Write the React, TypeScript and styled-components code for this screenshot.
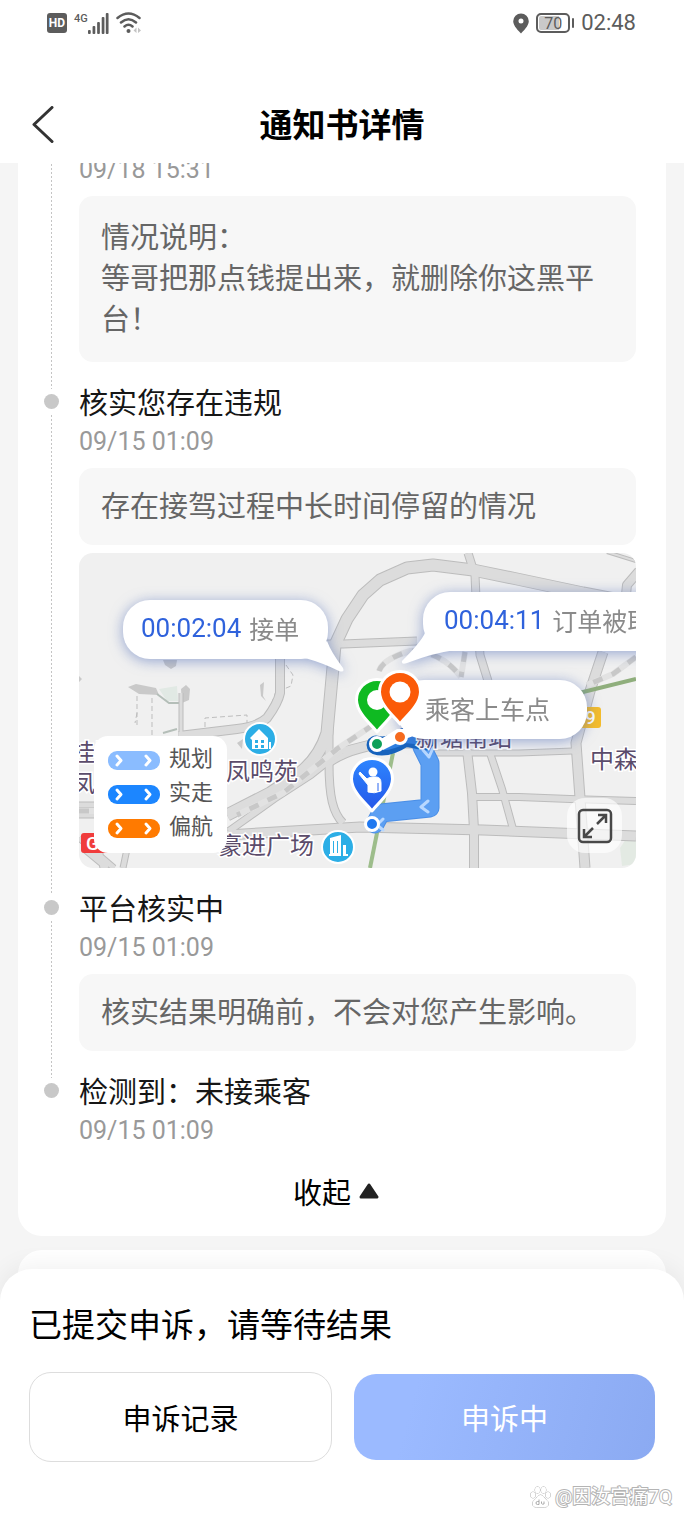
import React from "react";
import styled, { createGlobalStyle } from "styled-components";

const GlobalStyle = createGlobalStyle`
  *, *::before, *::after { box-sizing: border-box; }
  body {
    margin: 0;
    background: #f5f5f5;
    color: #161616;
    font-family: Roboto, "Noto Sans CJK SC", sans-serif;
  }
  button { font: inherit; color: inherit; border: 0; padding: 0; background: none; cursor: pointer; }
  h1, h2, h3, p, ol { margin: 0; padding: 0; font-weight: 400; }
`;

const Screen = styled.div`
  display: flex;
  flex-direction: column;
  min-height: 100vh;
`;

/* ---------- header ---------- */

const Header = styled.header`
  background: #fff;
`;

const StatusBar = styled.div`
  display: flex;
  align-items: center;
  justify-content: space-between;
  height: 46px;
  padding: 0 48px 0 47px;
  color: #5c5c5c;
`;

const StatusGroup = styled.div`
  display: flex;
  align-items: center;
  gap: 7px;
`;

const HdBadge = styled.span`
  width: 20px;
  height: 20px;
  border-radius: 3px;
  background: #5c5c5c;
  color: #fff;
  font-size: 12px;
  font-weight: 700;
  line-height: 20px;
  text-align: center;
`;

const Signal = styled.div`
  display: flex;
  align-items: flex-start;
`;

const SignalType = styled.span`
  font-size: 11px;
  font-weight: 500;
  line-height: 11px;
`;

const Battery = styled.span`
  display: flex;
  align-items: center;
  gap: 2px;
  &::after {
    content: "";
    width: 2px;
    height: 10px;
    border-radius: 1px;
    background: #5c5c5c;
  }
`;

const BatteryLevel = styled.span`
  width: 34px;
  height: 20px;
  border: 2px solid #5c5c5c;
  border-radius: 5px;
  box-shadow: inset 0 0 0 1px #fff;
  background: linear-gradient(90deg, #c9c9c9 70%, #fff 70%);
  font-size: 16px;
  line-height: 17px;
  text-align: center;
`;

const Clock = styled.time`
  font-size: 22px;
  line-height: 24px;
`;

const NavBar = styled.nav`
  display: grid;
  grid-template-columns: 1fr auto 1fr;
  align-items: center;
  height: 117px;
  padding: 43px 29px 0;
`;

const BackButton = styled.button`
  display: flex;
  width: 28px;
  height: 44px;
  align-items: center;
`;

const PageTitle = styled.h1`
  color: #000;
  font-size: 33px;
  font-weight: 700;
  line-height: 44px;
`;

/* ---------- timeline ---------- */

const Content = styled.main`
  flex: 1;
  overflow: hidden;
  padding: 0 18px;
`;

const Card = styled.section`
  margin-top: -11px;
  padding: 0 30px 25px 0;
  border-radius: 0 0 24px 24px;
  background: #fff;
`;

const NextCard = styled.section`
  height: 60px;
  margin-top: 14px;
  border-radius: 24px;
  background: #fff;
`;

const Timeline = styled.ol`
  list-style: none;
`;

const TimelineItem = styled.li`
  display: grid;
  grid-template-columns: 61px minmax(0, 1fr);
  &:not(:last-child) > div { padding-bottom: 22px; }
`;

const Rail = styled.span<{ $dot: boolean; $line: boolean }>`
  display: flex;
  flex-direction: column;
  align-items: center;
  gap: 6px;
  margin-bottom: -5px;
  padding: ${(p) => (p.$dot ? "10px" : "0")} 0 0 6px;
  &::before {
    content: "";
    display: ${(p) => (p.$dot ? "block" : "none")};
    width: 15px;
    height: 15px;
    border-radius: 50%;
    background: #c8c8c8;
  }
  &::after {
    content: "";
    flex: 1;
    width: 1px;
    background: ${(p) => (p.$line ? "repeating-linear-gradient(#c4c4c4 0 2px, #fff 2px 4px)" : "none")};
  }
`;

const ItemTitle = styled.h2`
  font-size: 29px;
  line-height: 40px;
`;

const ItemDate = styled.time`
  display: block;
  color: #999;
  font-size: 25px;
  line-height: 36px;
`;

const Note = styled.p<{ $roomy?: boolean }>`
  margin-top: 8px;
  padding: ${(p) => (p.$roomy ? "22px 22px 21px" : "19px 22px 17px")};
  border-radius: 14px;
  background: #f7f7f7;
  color: #666;
  font-size: 29px;
  line-height: 41px;
`;

const CollapseButton = styled.button`
  display: flex;
  align-items: center;
  gap: 8px;
  height: 40px;
  margin: 22px auto 0;
  padding-left: 18px;
  color: #000;
  font-size: 29px;
`;

/* ---------- map ---------- */

const MapPanel = styled.figure`
  position: relative;
  height: 315px;
  margin: 8px 0 0;
  border-radius: 14px;
  overflow: hidden;
  background: #f0f0f0;
  isolation: isolate;
`;

const MapLayer = styled.svg`
  position: absolute;
  inset: 0;
  width: 100%;
  height: 100%;
`;

const Bubble = styled.div<{ $x: number; $y: number; $width: number; $pad: number }>`
  position: absolute;
  left: ${(p) => p.$x}px;
  top: ${(p) => p.$y}px;
  display: flex;
  align-items: center;
  gap: 8px;
  width: ${(p) => p.$width}px;
  height: 59px;
  padding: 0 0 3px ${(p) => p.$pad}px;
  border-radius: 27px;
  background: #fff;
  color: #8a8a8a;
  font-size: 25px;
  white-space: nowrap;
  filter: drop-shadow(0 2px 7px rgba(70, 100, 180, 0.55));
`;

const BubbleTime = styled.time`
  color: #2f62dc;
  font-size: 26px;
`;

const Tail = styled.svg<{ $x: number; $y: number }>`
  position: absolute;
  left: ${(p) => p.$x}px;
  top: ${(p) => p.$y}px;
`;

const Legend = styled.figcaption`
  position: absolute;
  left: 15px;
  top: 183px;
  display: grid;
  grid-auto-rows: 34px;
  width: 133px;
  padding: 7px 14px 8px;
  border-radius: 14px;
  background: #fff;
  color: #555;
  font-size: 22px;
  line-height: 30px;
`;

const LegendRow = styled.span`
  display: flex;
  align-items: center;
  gap: 9px;
`;

const LegendLabel = styled.span`
  padding-bottom: 3px;
`;

const ExpandButton = styled.button`
  position: absolute;
  right: 14px;
  bottom: 15px;
  display: grid;
  place-items: center;
  width: 55px;
  height: 55px;
  border-radius: 18px;
  background: rgba(255, 255, 255, 0.65);
`;

/* ---------- bottom sheet ---------- */

const Sheet = styled.footer`
  position: relative;
  margin-top: -41px;
  padding: 35px 29px 12px;
  border-radius: 32px 32px 0 0;
  background: #fff;
  box-shadow: 0 -4px 24px rgba(0, 0, 0, 0.06);
`;

const SheetTitle = styled.h2`
  color: #000;
  font-size: 33px;
  line-height: 44px;
`;

const Actions = styled.div`
  display: flex;
  align-items: center;
  gap: 22px;
  margin-top: 24px;
`;

const ActionButton = styled.button<{ $primary?: boolean }>`
  flex: 1;
  height: ${(p) => (p.$primary ? 86 : 90)}px;
  border: ${(p) => (p.$primary ? "0" : "1px solid #ddd")};
  border-radius: 22px;
  background: ${(p) => (p.$primary ? "linear-gradient(105deg, #9bbaff 20%, #8baaf2)" : "#fff")};
  color: ${(p) => (p.$primary ? "#fff" : "#000")};
  font-size: 29px;
`;

const Signature = styled.p`
  display: flex;
  align-items: center;
  justify-content: flex-end;
  gap: 4px;
  margin: 23px -17px 0 0;
  color: #fff;
  font-size: 19px;
  line-height: 23px;
  -webkit-text-stroke: 2px #b4b4b4;
  paint-order: stroke fill;
`;

/* ---------- drawings ---------- */

const roads: { d: string; w: number }[] = [
  { d: "M264 270C254 260 250 244 250 210V172", w: 7 },
  { d: "M249 212Q262 202 281 197L300 192H352", w: 5 },
  { d: "M148 282L281 274L404 277L557 283", w: 9 },
  { d: "M389 0L396 22L397 45L401 102L409 128", w: 7 },
  { d: "M388 197L393 240L395 277L395 315", w: 8 },
  { d: "M230 91H264L338 88", w: 7 },
  { d: "M524 99L511 138L497 190L501 245L506 315", w: 9 },
  { d: "M350 200H440L494 198", w: 5 },
  { d: "M394 244H440L491 246L557 248", w: 6 },
  { d: "M411 200L423 236L434 276", w: 6 },
  { d: "M528 -1L557 8", w: 2 },
  { d: "M560 18L548 32L545 60", w: 8 },
  { d: "M201 100V140Q199 150 188 165Q178 174 158 176L100 183", w: 8 },
  { d: "M102 140V185", w: 3 },
  { d: "M148 262L191 240L218 222Q240 206 248 180L251 147L256 92L268 66L284 42L301 27L328 15L354 12L394 17L438 26L504 40L557 50", w: 11 },
  { d: "M150 278L195 246L232 222L262 198L293 190", w: 6 },
  { d: "M0 252H20M0 262H20M5 296L28 315M20 296L24 315M48 296L44 315M0 285L35 315", w: 5 },
];

const rails = [
  "M300 118Q304 106 331 98Q362 98 382 124",
  "M386 99L382 124",
  "M557 104L534 121L508 132",
  "M294 172L258 196L204 240L158 262",
  "M0 258H20",
];

function MapBase() {
  return (
    <MapLayer viewBox="0 0 557 315" preserveAspectRatio="xMinYMid slice" aria-hidden="true">
      <g fill="#c9c9c9">
        <path d="M49 134L57 131L77 135L80 142L60 141ZM102 136L107 132L111 136L110 147L103 150ZM84 107H98L97 113L92 116L86 112ZM181 132L185 129L184 143L187 148L182 143ZM158 190L164 186L163 196ZM0 123L3 126L0 129Z" />
        <path fill="#e1e9e4" d="M80 136L98 133L99 148L88 148Z" />
      </g>
      <path d="M541 295l8-12 8 2v26l-14 2z" fill="#e3eae3" />
      <g fill="none" stroke="#bdbdbd" strokeWidth="1" strokeDasharray="5 3">
        <path d="M58 143V175M73 145V182M58 160L56 170M126 182V165L168 162V172M190 158L200 130M207 112L214 122L212 133L200 138" />
      </g>
      <path d="M78 141L90 150H100M84 180L98 176" fill="none" stroke="#b4beb8" strokeWidth="2" />
      <g fill="none" strokeLinejoin="round">
        {roads.map((r) => <path key={r.d} d={r.d} stroke="#bcbcbc" strokeWidth={r.w + 2} />)}
        {roads.map((r) => <path key={r.d} d={r.d} stroke="#dcdcdc" strokeWidth={r.w} />)}
        {rails.map((d) => <path key={d} d={d} stroke="#e2e2e2" strokeWidth="6" />)}
        {rails.map((d) => <path key={d} d={d} stroke="#c8c8c8" strokeWidth="5" strokeDasharray="10 10" />)}
        <path d="M500 140L557 126" stroke="#8fae7c" strokeWidth="4" />
        <path d="M314 200L291 315" stroke="#9dbd8b" strokeWidth="4" />
      </g>
      <g fill="none" strokeLinejoin="round" strokeLinecap="round">
        <path d="M343 194L351 210V255L302 260L296 271" stroke="#4a8ee6" strokeWidth="19" />
        <path d="M343 194L351 210V255L302 260L296 271" stroke="#5c9ff2" strokeWidth="17" />
        <path d="M297 192Q308 196 326 184L346 188" stroke="#1763bd" strokeWidth="19" />
        <path d="M297 190Q308 194 326 184L346 186" stroke="#2f7fe0" strokeWidth="12" />
        <path d="M344 197L350 204L354 195M349 248L342 254L349 259M304 266L298 272L304 277" stroke="#b8d8ff" strokeWidth="3" />
      </g>
      <rect x="470" y="154" width="52" height="21" rx="3" fill="#f4bc2c" />
      <rect x="2" y="280" width="44" height="20" rx="3" fill="#f03c3c" />
      <g fontSize="19" fontWeight="500" fill="#fff">
        <text x="506" y="171">9</text>
        <text x="7" y="297">G</text>
      </g>
      <g fontSize="24" fill="#5b4c6b" stroke="#fff" strokeWidth="3" paintOrder="stroke">
        <text x="-8" y="208">桂限</text>
        <text x="-8" y="239">凤苑</text>
        <text x="147" y="227">凤鸣苑</text>
        <text x="139" y="301">豪进广场</text>
        <text x="511" y="215">中森</text>
        <text x="337" y="193">新塘南站</text>
      </g>
      <g fill="#2caee6" stroke="#fff" strokeWidth="2">
        <circle cx="181" cy="186" r="16" />
        <circle cx="259" cy="294" r="16" />
      </g>
      <g fill="#fff">
        <path d="M171 185L180 176L189 185V196H173V187Z" />
        <path d="M190 189h2v7h-2z" />
        <path d="M251 285L262 282V303H250V301H251ZM264 292H267V301H269V303H264Z" />
      </g>
      <path d="M176 187h3v3h-3zM182 187h3v3h-3zM176 192h3v3h-3zM182 192h3v3h-3zM254 288h1v12h-1zM258 288h1v12h-1z" fill="#2caee6" />
    </MapLayer>
  );
}

function Pin({ x, y, fill, children }: { x: number; y: number; fill: string; children?: React.ReactNode }) {
  return (
    <g transform={`translate(${x} ${y})`}>
      <path
        d="M0 32C-5 25 -20 14 -20.500 0A20.500 20.500 0 0 1 20.500 0C20 14 5 25 0 32Z"
        fill={fill}
        stroke="#fff"
        strokeWidth="3"
        strokeLinejoin="round"
      />
      {children}
    </g>
  );
}

function MapPins() {
  return (
    <MapLayer viewBox="0 0 557 315" preserveAspectRatio="xMinYMid slice" aria-hidden="true">
      <defs>
        <linearGradient id="passengerPin" x1="0" y1="0" x2="0" y2="1">
          <stop offset="0" stopColor="#2e86ff" />
          <stop offset="1" stopColor="#2456e8" />
        </linearGradient>
      </defs>
      <path d="M302 186L318 176H340V181L326 186L304 197Z" fill="#fff" />
      <g stroke="#fff" strokeWidth="3">
        <circle cx="298" cy="191" r="6.500" fill="#10a05a" />
        <circle cx="321" cy="184" r="6.500" fill="#f56a1e" />
        <circle cx="293" cy="271" r="6.500" fill="#1f78f0" />
      </g>
      <Pin x={298} y={147} fill="#0fba22"><circle r="10" fill="#fff" /></Pin>
      <Pin x={321} y={139} fill="#fb5a08"><circle r="10.500" fill="#fff" /></Pin>
      <Pin x={293} y={226} fill="url(#passengerPin)">
        <circle cx="1" cy="-7" r="4.500" fill="#fff" />
        <path d="M-12 -7L-5 0Q-3 -2 1 -2H4Q9 -2 9 4V12Q2 15 -4 13V6L-13 -5Z" fill="#fff" stroke="#fff" strokeWidth="1" strokeLinejoin="round" />
        <path d="M6 4V12" stroke="#2a66f0" strokeWidth="1" />
      </Pin>
    </MapLayer>
  );
}

function LegendSwatch({ color }: { color: string }) {
  return (
    <svg width="52" height="19" viewBox="0 0 52 19" aria-hidden="true">
      <rect width="52" height="19" rx="9" fill={color} />
      <path d="M9 5l4 4.500-4 4.500M38 5l4 4.500-4 4.500" fill="none" stroke="#fff" strokeWidth="3" strokeLinecap="round" strokeLinejoin="round" />
    </svg>
  );
}

const legend = [
  { label: "规划", color: "#8abcff" },
  { label: "实走", color: "#1c86ff" },
  { label: "偏航", color: "#ff7a00" },
];

function RouteMap() {
  return (
    <MapPanel>
      <MapBase />
      <Bubble $x={318} $y={127} $width={190} $pad={28}>乘客上车点</Bubble>
      <Bubble $x={44} $y={47} $width={205} $pad={18}>
        <Tail $x={180} $y={38} width="42" height="36" viewBox="0 0 42 36" aria-hidden="true">
          <path d="M24 3Q28 14 40 30Q42 35 36 33Q20 25 2 20Z" fill="#fff" />
        </Tail>
        <BubbleTime>00:02:04</BubbleTime>接单
      </Bubble>
      <Bubble $x={344} $y={39} $width={260} $pad={21}>
        <Tail $x={-22} $y={38} width="56" height="36" viewBox="0 0 56 36" aria-hidden="true">
          <path d="M24 3Q20 12 1 31Q0 35 6 33Q32 23 54 20Z" fill="#fff" />
        </Tail>
        <BubbleTime>00:04:11</BubbleTime>订单被取消
      </Bubble>
      <MapPins />
      <Legend>
        {legend.map((l) => (
          <LegendRow key={l.label}>
            <LegendSwatch color={l.color} />
            <LegendLabel>{l.label}</LegendLabel>
          </LegendRow>
        ))}
      </Legend>
      <ExpandButton type="button" aria-label="展开地图">
        <svg width="36" height="36" viewBox="0 0 36 36" fill="none" stroke="#484848" strokeWidth="2.500" aria-hidden="true">
          <rect x="2" y="2" width="32" height="32" rx="4" />
          <path d="M20 16L29 7M21 7H29V15M16 20L7 29M7 21V29H15" />
        </svg>
      </ExpandButton>
    </MapPanel>
  );
}

type EntryProps = { title?: string; date: string; note?: string[]; last?: boolean; children?: React.ReactNode };

function Entry({ title, date, note, last = false, children }: EntryProps) {
  return (
    <TimelineItem>
      <Rail $dot={Boolean(title)} $line={!last} />
      <div>
        {title && <ItemTitle>{title}</ItemTitle>}
        <ItemDate>{date}</ItemDate>
        {note && (
          <Note $roomy={note.length > 1}>
            {note.map((line, i) => (
              <React.Fragment key={line}>
                {i > 0 && <br />}
                {line}
              </React.Fragment>
            ))}
          </Note>
        )}
        {children}
      </div>
    </TimelineItem>
  );
}

export default function App() {
  return (
    <Screen>
      <GlobalStyle />
      <Header>
        <StatusBar>
          <StatusGroup>
            <HdBadge>HD</HdBadge>
            <Signal>
              <SignalType>4G</SignalType>
              <svg width="21" height="21" viewBox="0 0 23 21" preserveAspectRatio="none" fill="#5c5c5c" aria-hidden="true">
                <rect x="0" y="17" width="3" height="4" rx="1" />
                <rect x="5" y="13" width="3" height="8" rx="1" />
                <rect x="10" y="9" width="3" height="12" rx="1" />
                <rect x="15" y="4" width="3" height="17" rx="1" />
                <rect x="19.500" y="0" width="3" height="21" rx="1" />
              </svg>
            </Signal>
            <svg width="26" height="22" viewBox="0 0 26 22" fill="none" stroke="#5c5c5c" strokeWidth="2.500" strokeLinecap="round" aria-hidden="true">
              <path d="M1.500 6Q12.500 -3 23.500 6M5 10.500Q12.500 4 20 10.500M8.500 14.500Q12.500 11 16.500 14.500" />
              <circle cx="12.500" cy="19" r="2" fill="#5c5c5c" stroke="none" />
              <path d="M20.500 15.500L17.500 18.500L20.500 21ZM22 15.500L25 18.500L22 21Z" fill="#c4c4c4" stroke="none" />
            </svg>
          </StatusGroup>
          <StatusGroup>
            <svg width="16" height="21" viewBox="0 0 16 21" aria-hidden="true">
              <path fillRule="evenodd" d="M8 0.500A7.800 7.800 0 0 1 15.800 8.300C15.800 13 10 18.500 8 20.500C6 18.500 0.200 13 0.200 8.300A7.800 7.800 0 0 1 8 0.500ZM8 5.500A2.500 2.500 0 1 0 8 10.500A2.500 2.500 0 1 0 8 5.500Z" fill="#5c5c5c" />
            </svg>
            <Battery><BatteryLevel>70</BatteryLevel></Battery>
            <Clock>02:48</Clock>
          </StatusGroup>
        </StatusBar>
        <NavBar>
          <BackButton type="button" aria-label="返回">
            <svg width="28" height="40" viewBox="0 0 28 40" fill="none" stroke="#333" strokeWidth="3" strokeLinecap="round" strokeLinejoin="round" aria-hidden="true">
              <path d="M23 1.500L5 18.500L23 35.500" />
            </svg>
          </BackButton>
          <PageTitle>通知书详情</PageTitle>
        </NavBar>
      </Header>

      <Content>
        <Card>
          <Timeline>
            <Entry date="09/18 15:31" note={["情况说明：", "等哥把那点钱提出来，就删除你这黑平台！"]} />
            <Entry title="核实您存在违规" date="09/15 01:09" note={["存在接驾过程中长时间停留的情况"]}>
              <RouteMap />
            </Entry>
            <Entry title="平台核实中" date="09/15 01:09" note={["核实结果明确前，不会对您产生影响。"]} />
            <Entry title="检测到：未接乘客" date="09/15 01:09" last />
          </Timeline>
          <CollapseButton type="button">
            收起
            <svg width="20" height="16" viewBox="0 0 20 16" aria-hidden="true">
              <path d="M10 2L18 14H2Z" fill="#222" stroke="#222" strokeWidth="3" strokeLinejoin="round" />
            </svg>
          </CollapseButton>
        </Card>
        <NextCard />
      </Content>

      <Sheet>
        <SheetTitle>已提交申诉，请等待结果</SheetTitle>
        <Actions>
          <ActionButton type="button">申诉记录</ActionButton>
          <ActionButton type="button" $primary>申诉中</ActionButton>
        </Actions>
        <Signature>
          <svg width="21" height="22" viewBox="0 0 21 22" fill="#fff" stroke="#aaa" strokeWidth="1" aria-hidden="true">
            <ellipse cx="3" cy="9" rx="2.500" ry="3" />
            <ellipse cx="7.500" cy="4" rx="2.500" ry="3.200" />
            <ellipse cx="13.500" cy="4" rx="2.500" ry="3.200" />
            <ellipse cx="18" cy="9" rx="2.500" ry="3" />
            <path d="M10.500 9C13 9 14 12 17 14.500C20 17.500 18 21.500 14.500 21H6.500C3 21.500 1 17.500 4 14.500C7 12 8 9 10.500 9Z" />
            <path d="M9 13.500V18.500H7.500A1.500 1.500 0 0 1 7.500 15.500H9M11.500 15.500V17.500Q12 18.500 14 18V15.500" fill="none" />
          </svg>
          @因汝宫痛7Q
        </Signature>
      </Sheet>
    </Screen>
  );
}
